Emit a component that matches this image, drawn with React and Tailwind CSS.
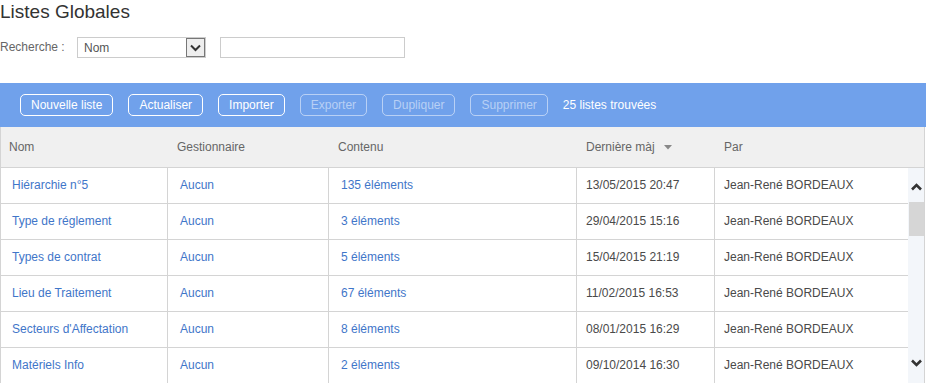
import React from "react";

const rows = [
  ["Hiérarchie n°5", "Aucun", "135 éléments", "13/05/2015 20:47", "Jean-René BORDEAUX"],
  ["Type de réglement", "Aucun", "3 éléments", "29/04/2015 15:16", "Jean-René BORDEAUX"],
  ["Types de contrat", "Aucun", "5 éléments", "15/04/2015 21:19", "Jean-René BORDEAUX"],
  ["Lieu de Traitement", "Aucun", "67 éléments", "11/02/2015 16:53", "Jean-René BORDEAUX"],
  ["Secteurs d'Affectation", "Aucun", "8 éléments", "08/01/2015 16:29", "Jean-René BORDEAUX"],
  ["Matériels Info", "Aucun", "2 éléments", "09/10/2014 16:30", "Jean-René BORDEAUX"],
];

function Btn({ children, disabled }) {
  return (
    <button
      className={
        disabled
          ? "h-[22px] px-[10px] rounded-[5px] border border-white/50 text-white/50 text-[12px] leading-none"
          : "h-[22px] px-[10px] rounded-[5px] border border-white text-white text-[12px] leading-none"
      }
    >
      {children}
    </button>
  );
}

function Chevron({ up, w = 11, sw = 2 }) {
  return (
    <svg width={w} height="8" viewBox="0 0 11 8">
      <path
        d={up ? "M1 6.5 L5.5 2 L10 6.5" : "M1 1.5 L5.5 6 L10 1.5"}
        fill="none"
        stroke="#333"
        strokeWidth={sw}
      />
    </svg>
  );
}

export default function App() {
  return (
    <div className="w-[926px] h-[383px] overflow-hidden bg-white font-['Liberation_Sans',Arial,sans-serif]">
      <div className="h-[26px] pt-[1px] text-[19px] leading-[22px] text-[#333]">Listes Globales</div>
      <div className="h-[57px] flex items-start pt-[11px]">
        <span className="text-[12px] text-[#666] leading-[21px] w-[77px]">Recherche :</span>
        <div className="w-[129px] h-[21px] border border-[#ccc] flex items-center justify-between">
          <span className="text-[12px] text-[#555] pl-[6px]">Nom</span>
          <div className="w-[19px] h-[19px] border border-[#777] bg-[#eee] flex items-center justify-center">
            <Chevron />
          </div>
        </div>
        <div className="ml-[14px] w-[185px] h-[21px] border border-[#ccc]" />
      </div>
      <div className="h-[44px] bg-[#70a1eb] flex items-center gap-[15px] pl-[20px]">
        <Btn>Nouvelle liste</Btn>
        <Btn>Actualiser</Btn>
        <Btn>Importer</Btn>
        <Btn disabled>Exporter</Btn>
        <Btn disabled>Dupliquer</Btn>
        <Btn disabled>Supprimer</Btn>
        <span className="text-white text-[12px]">25 listes trouvées</span>
      </div>
      <div className="w-[925px] border-l border-r border-[#d4d4d4]">
        <div className="h-[41px] bg-[#f0f0f0] border-b border-[#d4d4d4] flex items-center text-[12px] text-[#666]">
          <div className="w-[168px] pl-[8px]">Nom</div>
          <div className="w-[161px] pl-[8px]">Gestionnaire</div>
          <div className="w-[248px] pl-[8px]">Contenu</div>
          <div className="w-[138px] pl-[8px] flex items-center">
            Dernière màj
            <svg width="8" height="5" viewBox="0 0 8 5" className="ml-[9px]">
              <path d="M0 0 L8 0 L4 4.5 Z" fill="#888" />
            </svg>
          </div>
          <div className="w-[194px] pl-[8px]">Par</div>
        </div>
        <div className="flex">
          <div className="w-[908px]">
            {rows.map((r, i) => (
              <div key={i} className="h-[36px] border-b border-[#d4d4d4] flex text-[12px]">
                <div className="w-[167px] pl-[11px] pb-[2px] flex items-center text-[#3f76c9] border-r border-[#d4d4d4]">{r[0]}</div>
                <div className="w-[161px] pl-[12px] pb-[2px] flex items-center text-[#3f76c9] border-r border-[#d4d4d4]">{r[1]}</div>
                <div className="w-[248px] pl-[12px] pb-[2px] flex items-center text-[#3f76c9] border-r border-[#d4d4d4]">{r[2]}</div>
                <div className="w-[138px] pl-[9px] pb-[2px] flex items-center text-[#4a4a4a] border-r border-[#d4d4d4]">{r[3]}</div>
                <div className="flex-1 pl-[9px] pb-[2px] flex items-center text-[#4a4a4a]">{r[4]}</div>
              </div>
            ))}
          </div>
          <div className="w-[16px] h-[215px] bg-[#f3f6fa] flex flex-col items-center">
            <div className="h-[34px] flex items-center justify-center pt-[4px]">
              <Chevron up sw={2.6} />
            </div>
            <div className="w-[15px] h-[34px] bg-[#d6d6d6] ml-[1px]" />
            <div className="flex-1" />
            <div className="h-[34px] flex items-center justify-center pb-[6px]">
              <Chevron sw={2.6} />
            </div>
          </div>
        </div>
      </div>
    </div>
  );
}
